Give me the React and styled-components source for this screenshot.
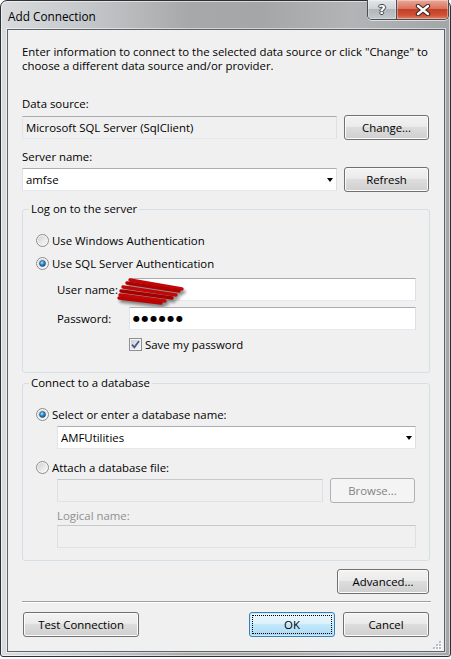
import React from 'react';
import styled, { createGlobalStyle, css } from 'styled-components';

const GlobalStyle = createGlobalStyle`
  html, body {
    margin: 0;
    padding: 0;
    background: #fff;
  }
  body {
    font-family: "Segoe UI", "Open Sans", "Noto Sans", sans-serif;
    font-size: 11.4px;
    color: #000;
  }
`;

function RadioIcon({ checked }) {
  return (
    <svg width="13" height="13" viewBox="0 0 13 13">
      <defs>
        <linearGradient id="radioBg" x1="0" y1="0" x2="1" y2="1">
          <stop offset="0" stopColor="#cfd1d3" />
          <stop offset="1" stopColor="#fbfbfb" />
        </linearGradient>
        <radialGradient id="radioDot" cx="0.4" cy="0.35" r="0.75">
          <stop offset="0" stopColor="#b4e6fb" />
          <stop offset="0.45" stopColor="#2c8fd3" />
          <stop offset="1" stopColor="#0c4574" />
        </radialGradient>
      </defs>
      <circle cx="6.5" cy="6.5" r="6" fill="#f6f6f6" stroke="#8a8c8e" />
      <circle cx="6.5" cy="6.5" r="4.6" fill="url(#radioBg)" />
      {checked && (
        <circle cx="6.5" cy="6.5" r="3" fill="url(#radioDot)" stroke="#17476f" strokeWidth="0.6" />
      )}
    </svg>
  );
}

function CheckIcon() {
  return (
    <svg width="13" height="13" viewBox="0 0 13 13">
      <defs>
        <linearGradient id="checkBg" x1="0" y1="0" x2="1" y2="1">
          <stop offset="0" stopColor="#cbcfd5" />
          <stop offset="1" stopColor="#f7f7f7" />
        </linearGradient>
      </defs>
      <rect x="0.5" y="0.5" width="12" height="12" fill="#f4f4f4" stroke="#8e8f8f" />
      <rect x="2" y="2" width="9" height="9" fill="url(#checkBg)" />
      <path d="M3 6.6 L5.4 9.3 L10 3" stroke="#40598f" strokeWidth="1.7" fill="none" />
    </svg>
  );
}

function Scribble() {
  return (
    <ScribbleSvg width="70" height="30" viewBox="0 0 70 30">
      <g stroke="#c00808" strokeWidth="3.4" strokeLinecap="round" fill="none">
        <path d="M13 3 L65 12" />
        <path d="M10 6 L62 14" stroke="#b10000" />
        <path d="M6 10 L59 18" />
        <path d="M4 14 L55 21" stroke="#a50000" />
        <path d="M3 18 L48 24" />
        <path d="M2 21 L44 26" stroke="#b80404" />
      </g>
    </ScribbleSvg>
  );
}

function ResizeGrip() {
  const dots = [
    [6, 0],
    [3, 3],
    [6, 3],
    [0, 6],
    [3, 6],
    [6, 6],
  ];
  return (
    <GripSvg width="9" height="9" viewBox="0 0 9 9">
      {dots.map(([x, y]) => (
        <g key={`${x}-${y}`}>
          <rect x={x + 1} y={y + 1} width="2" height="2" fill="#fff" />
          <rect x={x} y={y} width="2" height="2" fill="#b9bcc0" />
        </g>
      ))}
    </GripSvg>
  );
}

function App() {
  return (
    <>
      <GlobalStyle />
      <S.Window>
        <S.TitleBar>
          <S.Title>Add Connection</S.Title>
          <S.CaptionButtons>
            <S.CaptionButton $variant="help">
              <S.HelpGlyph>?</S.HelpGlyph>
            </S.CaptionButton>
            <S.CaptionButton $variant="close">
              <svg width="16" height="12" viewBox="0 0 16 12">
                <path d="M3 2 L13 10 M13 2 L3 10" stroke="#3a2420" strokeWidth="4.4" strokeLinecap="round" />
                <path d="M3 2 L13 10 M13 2 L3 10" stroke="#fff" strokeWidth="2.4" strokeLinecap="round" />
              </svg>
            </S.CaptionButton>
          </S.CaptionButtons>
        </S.TitleBar>

        <S.Client>
          <S.Description>
            Enter information to connect to the selected data source or click "Change" to
            <br />
            choose a different data source and/or provider.
          </S.Description>

          <S.Label $mt={24}>Data source:</S.Label>
          <S.Row $mt={4}>
            <S.TextBox $width={315} $readOnly>Microsoft SQL Server (SqlClient)</S.TextBox>
            <S.Button $width={85}>Change...</S.Button>
          </S.Row>

          <S.Label $mt={10}>Server name:</S.Label>
          <S.Row $mt={3}>
            <S.TextBox $width={315}>
              amfse
              <S.Arrow />
            </S.TextBox>
            <S.Button $width={85}>Refresh</S.Button>
          </S.Row>

          <S.Group $mt={10}>
            <S.Legend>Log on to the server</S.Legend>
            <S.GroupBody $pb={20}>
              <S.Option>
                <RadioIcon />
                <span>Use Windows Authentication</span>
              </S.Option>
              <S.Option $mt={7}>
                <RadioIcon checked />
                <span>Use SQL Server Authentication</span>
              </S.Option>
              <S.FieldRow $mt={7}>
                <S.FieldLabel>User name:</S.FieldLabel>
                <S.TextBox />
                <Scribble />
              </S.FieldRow>
              <S.FieldRow $mt={6}>
                <S.FieldLabel>Password:</S.FieldLabel>
                <S.TextBox>
                  <S.Dots>●●●●●●</S.Dots>
                </S.TextBox>
              </S.FieldRow>
              <S.Option $mt={6} $indent={93}>
                <CheckIcon />
                <span>Save my password</span>
              </S.Option>
            </S.GroupBody>
          </S.Group>

          <S.Group $mt={3}>
            <S.Legend>Connect to a database</S.Legend>
            <S.GroupBody $pb={12}>
              <S.Option>
                <RadioIcon checked />
                <span>Select or enter a database name:</span>
              </S.Option>
              <S.Indented $mt={4}>
                <S.TextBox>
                  AMFUtilities
                  <S.Arrow />
                </S.TextBox>
              </S.Indented>
              <S.Option $mt={10}>
                <RadioIcon />
                <span>Attach a database file:</span>
              </S.Option>
              <S.Indented $mt={3} $pr={1}>
                <S.TextBox $disabled />
                <S.Button $width={85} $variant="disabled">
                  Browse...
                </S.Button>
              </S.Indented>
              <S.Indented $mt={6}>
                <S.DisabledLabel>Logical name:</S.DisabledLabel>
              </S.Indented>
              <S.Indented $mt={2}>
                <S.TextBox $disabled />
              </S.Indented>
            </S.GroupBody>
          </S.Group>

          <S.ButtonRow $mt={8} $justify="flex-end">
            <S.Button $width={92}>Advanced...</S.Button>
          </S.ButtonRow>

          <S.Separator />

          <S.ButtonRow $mt={9}>
            <S.Button $width={116}>Test Connection</S.Button>
            <S.Spacer />
            <S.Button $width={86} $variant="default">
              OK
            </S.Button>
            <S.Button $width={86}>Cancel</S.Button>
          </S.ButtonRow>

          <ResizeGrip />
        </S.Client>
      </S.Window>
    </>
  );
}
export default App;

const Window = styled.div`
  width: 451px;
  height: 657px;
  box-sizing: border-box;
  border: 1px solid #2e3033;
  border-radius: 7px 7px 3px 3px;
  background: linear-gradient(
    90deg,
    #d9dcdf 0%,
    #c6c9cc 18%,
    #a7a8a9 42%,
    #a5a6a7 58%,
    #b2b4b6 78%,
    #a3a6a9 100%
  );
  box-shadow: inset 0 0 0 1px rgba(255, 255, 255, 0.55);
  padding: 0 5px 4px 6px;
  display: flex;
  flex-direction: column;
`;

const TitleBar = styled.div`
  height: 28px;
  display: flex;
  align-items: flex-start;
`;

const Title = styled.div`
  margin: 7px 0 0 1px;
  font-size: 11.8px;
  line-height: 16px;
`;

const CaptionButtons = styled.div`
  margin: -1px -4px 0 auto;
  display: flex;
  border: 1px solid #4a4e52;
  border-top: none;
  border-radius: 0 0 5px 5px;
  overflow: hidden;
  box-shadow: 0 1px 0 rgba(255, 255, 255, 0.6);
`;

const captionVariants = {
  help: css`
    width: 28px;
    background: linear-gradient(#e3e6e9 0%, #cfd3d7 45%, #b1b6bb 50%, #c3c8cc 100%);
    border-right: 1px solid #4a4e52;
  `,
  close: css`
    width: 51px;
    background: linear-gradient(#eaa898 0%, #d8735f 45%, #c43f24 50%, #cf5136 80%, #e2846a 100%);
  `,
};

const CaptionButton = styled.div`
  height: 19px;
  display: flex;
  align-items: center;
  justify-content: center;
  box-shadow: inset 0 0 0 1px rgba(255, 255, 255, 0.35);
  ${({ $variant }) => captionVariants[$variant]};
`;

const HelpGlyph = styled.span`
  font-family: "DejaVu Sans", sans-serif;
  font-weight: bold;
  font-size: 13px;
  line-height: 13px;
  color: #fff;
  text-shadow:
    1px 0 0 #3c4044,
    -1px 0 0 #3c4044,
    0 1px 0 #3c4044,
    0 -1px 0 #3c4044;
`;

const Client = styled.div`
  flex: 1;
  position: relative;
  background: #f0f0f0;
  border: 1px solid #5f6368;
  box-shadow: 0 0 0 1px rgba(255, 255, 255, 0.5);
  padding: 15px 14px 0;
  display: flex;
  flex-direction: column;
`;

const Description = styled.p`
  margin: 0;
  line-height: 14px;
  white-space: nowrap;
`;

const Label = styled.div`
  margin-top: ${({ $mt }) => $mt || 0}px;
  line-height: 14px;
`;

const DisabledLabel = styled(Label)`
  color: #8f8f8f;
`;

const Row = styled.div`
  margin-top: ${({ $mt }) => $mt || 0}px;
  display: flex;
  align-items: center;
  justify-content: space-between;
  padding-right: 1px;
`;

const TextBox = styled.div`
  box-sizing: border-box;
  height: 23px;
  ${({ $width }) => ($width ? `width: ${$width}px; flex: none;` : 'flex: 1 1 0; min-width: 0;')}
  display: flex;
  align-items: center;
  padding: 0 3px;
  border: 1px solid;
  border-color: #abadb3 #dbdfe6 #e3e9ef #e2e3ea;
  background: ${({ $readOnly, $disabled }) => ($readOnly || $disabled ? '#f0f0f0' : '#fff')};
  ${({ $disabled }) =>
    $disabled &&
    css`
      border-color: #c6c8cc #dcdfe3 #dfe2e6 #dcdfe3;
    `};
  white-space: nowrap;
`;

const Arrow = styled.span`
  margin-left: auto;
  width: 0;
  height: 0;
  border-left: 3.5px solid transparent;
  border-right: 3.5px solid transparent;
  border-top: 4px solid #000;
`;

const buttonVariants = {
  default: css`
    border-color: #3c7fb1;
    background: linear-gradient(#ecf7fd 0%, #ddf1fc 45%, #c4e8fc 50%, #a9d9f4 100%);
    box-shadow: inset 0 0 0 1px #c8ecfd;
    outline: 1px dotted #000;
    outline-offset: -4px;
  `,
  disabled: css`
    border-color: #adb2b5;
    background: #f4f4f4;
    box-shadow: none;
    color: #838383;
  `,
};

const Button = styled.button`
  box-sizing: border-box;
  flex: none;
  width: ${({ $width }) => $width}px;
  height: 25px;
  padding: 0;
  font: inherit;
  color: #000;
  border: 1px solid #707070;
  border-radius: 3px;
  background: linear-gradient(#f3f3f3 0%, #ebebeb 45%, #dddddd 50%, #cfcfcf 100%);
  box-shadow: inset 0 0 0 1px #fbfbfb;
  ${({ $variant }) => buttonVariants[$variant]};
`;

const Group = styled.fieldset`
  margin: ${({ $mt }) => $mt || 0}px 0 0;
  padding: 0;
  min-width: 0;
  border: 1px solid #d5dfe5;
  border-radius: 3px;
`;

const Legend = styled.legend`
  margin-left: 6px;
  padding: 0 2px;
  line-height: 14px;
`;

const GroupBody = styled.div`
  padding: 16px 13px ${({ $pb }) => $pb}px;
  display: flex;
  flex-direction: column;
`;

const Option = styled.label`
  margin-top: ${({ $mt }) => $mt || 0}px;
  margin-left: ${({ $indent }) => $indent || 0}px;
  height: 16px;
  display: flex;
  align-items: center;
  gap: 3px;
  white-space: nowrap;
`;

const FieldRow = styled.div`
  position: relative;
  margin: ${({ $mt }) => $mt || 0}px 0 0 21px;
  display: flex;
  align-items: center;
`;

const FieldLabel = styled.span`
  width: 72px;
  flex: none;
  line-height: 14px;
`;

const Indented = styled.div`
  margin: ${({ $mt }) => $mt || 0}px 0 0 21px;
  display: flex;
  align-items: center;
  gap: 7px;
  padding-right: ${({ $pr }) => $pr || 0}px;
`;

const Dots = styled.span`
  font-family: "DejaVu Sans", sans-serif;
  font-size: 8px;
  letter-spacing: 1.6px;
  line-height: 10px;
`;

const ScribbleSvg = styled.svg`
  position: absolute;
  left: 60px;
  top: -1px;
  filter: drop-shadow(2px 3px 1.5px rgba(0, 0, 0, 0.45));
`;

const ButtonRow = styled.div`
  margin-top: ${({ $mt }) => $mt || 0}px;
  display: flex;
  justify-content: ${({ $justify }) => $justify || 'flex-start'};
  gap: 8px;
  padding: 0 1px;
`;

const Spacer = styled.div`
  flex: 1;
`;

const Separator = styled.div`
  margin-top: 7px;
  margin-right: -1px;
  height: 0;
  border-top: 1px solid #a0a0a0;
  border-bottom: 1px solid #fff;
`;

const GripSvg = styled.svg`
  position: absolute;
  right: 2px;
  bottom: 1px;
`;

const S = {
  Window,
  TitleBar,
  Title,
  CaptionButtons,
  CaptionButton,
  HelpGlyph,
  Client,
  Description,
  Label,
  DisabledLabel,
  Row,
  TextBox,
  Arrow,
  Button,
  Group,
  Legend,
  GroupBody,
  Option,
  FieldRow,
  FieldLabel,
  Indented,
  Dots,
  ButtonRow,
  Spacer,
  Separator,
};
